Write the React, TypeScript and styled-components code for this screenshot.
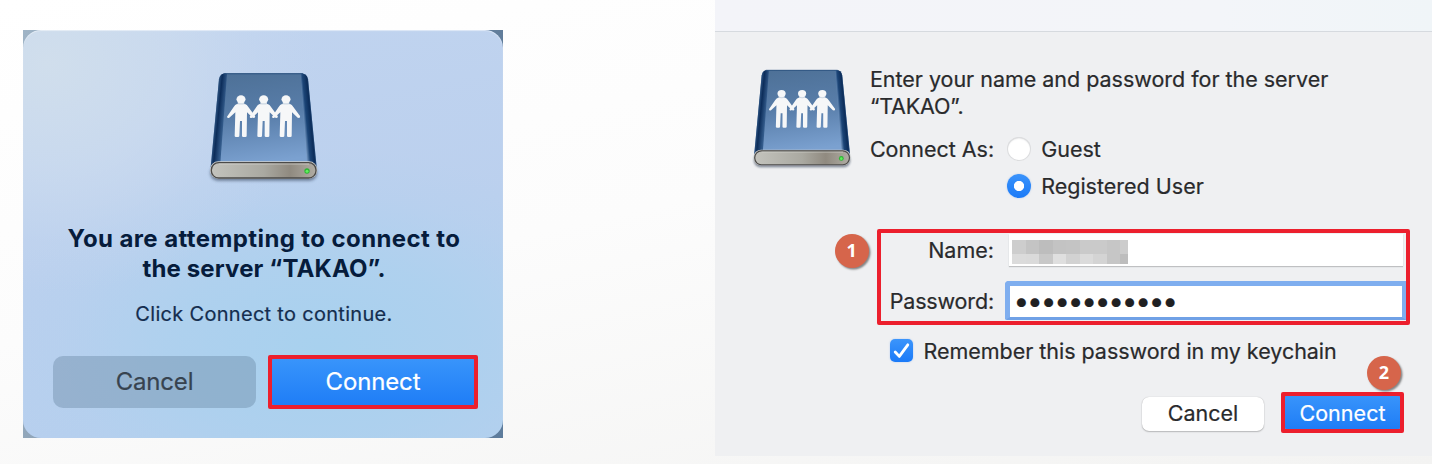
import React, { useId } from 'react';
import styled, { createGlobalStyle } from 'styled-components';

const GlobalStyle = createGlobalStyle`
  * { box-sizing: border-box; }
  body { margin: 0; font-family: "Inter", "Liberation Sans", sans-serif; }
  button { font-family: inherit; padding: 0; border: 0; }
`;

const Page = styled.main`
  display: flex;
  align-items: flex-start;
  width: 1432px;
  height: 464px;
  overflow: hidden;
  background: linear-gradient(168deg, #ffffff 0%, #fcfcfc 45%, #f3f3f2 100%);
`;

/* ---------- First dialog: connection prompt ---------- */

const PromptBackdrop = styled.section`
  flex: none;
  width: 480px;
  height: 408px;
  margin: 30px 212px 0 23px;
  background: linear-gradient(100deg, #9fb4c6 0%, #6c8199 50%, #5d7c9c 100%);
`;

const PromptDialog = styled.div`
  display: flex;
  flex-direction: column;
  align-items: center;
  height: 100%;
  padding: 40px 24px 0;
  border-radius: 18px;
  box-shadow: inset 0 1px 1px rgba(255, 255, 255, 0.5);
  background:
    radial-gradient(ellipse 270px 230px at 5% 8%, #d0deec 0%, rgba(205, 220, 238, 0.72) 45%, rgba(200, 217, 239, 0.25) 78%, rgba(200, 217, 239, 0) 100%),
    radial-gradient(ellipse 330px 200px at 62% 78%, #a8d1ee 0%, rgba(170, 209, 238, 0.7) 45%, rgba(174, 209, 238, 0.22) 78%, rgba(176, 208, 238, 0) 100%),
    linear-gradient(170deg, #c1d4ef 0%, #bbd0ee 50%, #b5cfee 100%);
`;

const PromptTitle = styled.h1`
  margin: 37.3px 0 0 2px;
  color: #061c3c;
  font-size: 24px;
  font-weight: 700;
  line-height: 30px;
  text-align: center;
`;

const TitleLine = styled.span<{ $tracking: number }>`
  display: block;
  letter-spacing: ${(p) => p.$tracking}px;
`;

const PromptHint = styled.p`
  margin: 17.2px 0 0 2px;
  color: #142d4e;
  font-size: 20px;
  line-height: 26px;
  letter-spacing: 0.3px;
  -webkit-text-stroke: 0.2px currentColor;
`;

const PromptActions = styled.div`
  display: flex;
  align-items: center;
  align-self: stretch;
  gap: 12px;
  margin: 27.5px 0 0 6px;
`;

const SoftButton = styled.button`
  width: 203px;
  height: 52px;
  border-radius: 10px;
  background: rgba(94, 124, 152, 0.36);
  color: #37434f;
  font-size: 24px;
  line-height: 52px;
  letter-spacing: -0.2px;
  -webkit-text-stroke: 0.2px currentColor;
`;

const Highlight = styled.div<{ $width: number; $height: number }>`
  width: ${(p) => p.$width}px;
  height: ${(p) => p.$height}px;
  border: 4px solid #ec1f2d;
  border-radius: 2px;
  background: #7d6fc0;
`;

const PrimaryButton = styled.button<{ $size: number; $tracking: number }>`
  display: flex;
  align-items: center;
  justify-content: center;
  width: 100%;
  height: 100%;
  border-radius: 2px;
  background: linear-gradient(#3894fb, #1f7df6);
  color: #fff;
  font-size: ${(p) => p.$size}px;
  letter-spacing: ${(p) => p.$tracking}px;
  -webkit-text-stroke: 0.2px currentColor;
`;

/* ---------- Second dialog: credentials ---------- */

const LoginWindow = styled.section`
  flex: 1;
  height: 456px;
  background: #eff0f2;
  color: #292a2c;
  font-size: 21.5px;
  line-height: 28px;
  -webkit-text-stroke: 0.2px currentColor;
`;

const TitleBar = styled.div`
  height: 32px;
  border-bottom: 1.5px solid #d6dadf;
  background: linear-gradient(90deg, #f3f4f9 0%, #f3f5f9 70%, #f0f5f8 100%);
`;

const Intro = styled.div`
  display: flex;
  align-items: flex-start;
  gap: 15px;
  padding: 34px 0 0 34.3px;
`;

const IconSlot = styled.div`
  display: flex;
  padding-top: 1px;
`;

const IntroText = styled.p`
  margin: 0 0 15px;
  line-height: 27px;
  letter-spacing: -0.02px;
`;

const ServerName = styled.span`
  letter-spacing: -0.15px;
`;

const ConnectAs = styled.div`
  display: flex;
  gap: 13px;
`;

const RadioGroup = styled.div`
  display: flex;
  flex-direction: column;
  gap: 9px;
`;

const Option = styled.div`
  display: flex;
  align-items: center;
  gap: 10px;
`;

const Radio = styled.span<{ $on?: boolean }>`
  width: 24px;
  height: 24px;
  border-radius: 50%;
  background: ${(p) => (p.$on ? 'radial-gradient(circle, #fff 0 4.7px, transparent 5.5px), linear-gradient(#3a93fb, #1b7af7)' : '#fff')};
  box-shadow: ${(p) => (p.$on ? '0 0 2px rgba(60, 130, 230, 0.35)' : 'inset 0 0 0 1px #dcdddf, inset 0 1px 2px #cfd0d2')};
`;

const FormArea = styled.div`
  position: relative;
  width: 533px;
  margin: 29px 0 0 162px;
`;

const Fields = styled.div`
  display: grid;
  grid-template-columns: 113px 1fr;
  grid-template-rows: 34px 40px;
  row-gap: 14px;
  height: 96px;
  border: 4px solid #ec1f2d;
  border-radius: 2px;
`;

const FieldLabel = styled.label<{ $tracking?: number }>`
  align-self: center;
  text-align: right;
  letter-spacing: ${(p) => p.$tracking ?? 0}px;
`;

const NameInput = styled.div`
  height: 32px;
  margin: 1px 3px 0 15px;
  padding: 6px 0 0 3px;
  background: #fff;
  box-shadow: 0 1px 1px #bfc0c2;
`;

const Mosaic = styled.div`
  display: grid;
  grid-template-columns: repeat(8, 13.5px) 7.5px;
  grid-template-rows: 13.5px 10.5px;
`;

const MosaicCell = styled.span<{ $tone: string }>`
  background: ${(p) => p.$tone};
`;

const PasswordInput = styled.div`
  height: 39px;
  margin-left: 11px;
  padding-left: 3.6px;
  border: 5px solid #7faeef;
  border-right-width: 4px;
  border-bottom: 3px solid #70a1e6;
  border-radius: 4px 0 0 2px;
  background: #fff;
  color: #1f2022;
  font-size: 28px;
  line-height: 30px;
  letter-spacing: -2.23px;
`;

const Remember = styled.div`
  display: flex;
  align-items: center;
  gap: 10.5px;
  margin: 12px 0 0 175px;
  letter-spacing: -0.03px;
`;

const Checkbox = styled.span`
  display: flex;
  width: 23px;
  height: 23px;
  margin-top: -2px;
  border-radius: 5px;
  background: linear-gradient(#3c95fb, #1a7af8);
  box-shadow: 0 0 2px rgba(60, 130, 230, 0.35);
`;

const LoginActions = styled.div`
  position: relative;
  display: flex;
  align-items: center;
  justify-content: flex-end;
  gap: 17px;
  margin: 27px 28px 0 0;
`;

const PlainButton = styled.button`
  width: 122px;
  height: 34px;
  margin-top: 3px;
  padding-bottom: 2px;
  border-radius: 7px;
  background: #fff;
  box-shadow: 0 0 1px rgba(0, 0, 0, 0.25), 0 1px 1.5px rgba(0, 0, 0, 0.22);
  color: #292a2c;
  font-size: 21.5px;
  -webkit-text-stroke: 0.2px currentColor;
`;

const StepBadge = styled.span<{ $left: number; $top: number }>`
  position: absolute;
  left: ${(p) => p.$left}px;
  top: ${(p) => p.$top}px;
  width: 34px;
  height: 34px;
  border-radius: 50%;
  background: #d6654b;
  box-shadow: 1.5px 1.5px 2px rgba(0, 0, 0, 0.45);
  color: #fff;
  font: 700 18px/33px "Open Sans", sans-serif;
  text-align: center;
  -webkit-text-stroke: 0;
`;

const mosaicTones = [
  '#cdcdcd', '#c4c4c4', '#bdbdbd', '#c3c3c3', '#c4c4c4', '#cacaca', '#cacaca', '#c6c6c6', '#cccccc',
  '#dbdbdb', '#dadada', '#c8c8c8', '#dfdfdf', '#d2d2d2', '#dbdbdb', '#d4d4d4', '#c6c6c6', '#bdbdbd',
];

function Figure({ x }: { x: number }) {
  return (
    <g transform={`translate(${x} 0)`}>
      <ellipse cx="0" cy="118" rx="13.5" ry="12" />
      <path d="M-10 127 H10 V136 H-10Z" opacity="0.75" />
      <path d="M-12 132 Q0 135 12 132 Q18 134 22 141 L42 168 Q44 173 39 174 L35 173 L18 157 L17 228 Q17 231 13 231 L7 231 Q3 231 3 228 L3 183 L-3 183 L-5 228 Q-5 231 -9 231 L-15 231 Q-19 231 -19 228 L-17 157 L-35 173 Q-41 176 -42 170 L-22 141 Q-18 134 -12 132Z" />
    </g>
  );
}

function ServerIcon({ size }: { size: number }) {
  const id = useId().replace(/:/g, '');
  return (
    <svg width={size} height={size} viewBox="16 30 350 350" style={{ display: 'block' }}>
      <defs>
        <linearGradient id={`${id}c`} x1="0" y1="0" x2="0.15" y2="1">
          <stop offset="0" stopColor="#4d7096" />
          <stop offset="0.5" stopColor="#587da9" />
          <stop offset="1" stopColor="#7ba1d0" />
        </linearGradient>
        <linearGradient id={`${id}l`} gradientUnits="userSpaceOnUse" x1="42" y1="170" x2="72" y2="173">
          <stop offset="0" stopColor="#3d6593" />
          <stop offset="0.45" stopColor="#0c2d5a" />
          <stop offset="1" stopColor="#335b8b" />
        </linearGradient>
        <linearGradient id={`${id}r`} gradientUnits="userSpaceOnUse" x1="310" y1="173" x2="342" y2="170">
          <stop offset="0" stopColor="#7699c3" />
          <stop offset="0.3" stopColor="#1c4577" />
          <stop offset="0.7" stopColor="#0c2d5a" />
          <stop offset="1" stopColor="#3d6593" />
        </linearGradient>
        <linearGradient id={`${id}b`} x1="0" y1="0" x2="1" y2="0">
          <stop offset="0" stopColor="#c3c3bd" />
          <stop offset="0.5" stopColor="#aaa9a1" />
          <stop offset="0.75" stopColor="#908a80" />
          <stop offset="1" stopColor="#b0aca3" />
        </linearGradient>
        <filter id={`${id}s`} x="-10%" y="-50%" width="120%" height="220%">
          <feGaussianBlur stdDeviation="4" />
        </filter>
      </defs>
      <rect x="32" y="316" width="320" height="46" rx="22" fill="#26364c" opacity="0.55" filter={`url(#${id}s)`} />
      <path d="M78 40 H304 Q322 40 325 58 L351 322 H33 L58 58 Q61 40 78 40Z" fill={`url(#${id}c)`} />
      <path d="M78 40 Q61 40 58 58 L33 322 L62 308 L82 42Z" fill={`url(#${id}l)`} />
      <path d="M302 40 Q322 40 325 58 L351 322 L322 308Z" fill={`url(#${id}r)`} />
      <path d="M72 41 H310" stroke="#2b527f" strokeWidth="3" />
      <rect x="31" y="304" width="322" height="52" rx="25" fill="#cfd0ce" />
      <rect x="35" y="308" width="314" height="46" rx="22" fill={`url(#${id}b)`} stroke="#4b4a48" strokeWidth="4" />
      <path d="M58 312 H328" stroke="#d6d6d1" strokeWidth="2" />
      <circle cx="322" cy="333" r="8" fill="#2fb435" />
      <circle cx="322" cy="334" r="4.5" fill="#5ff05c" />
      <g fill="#f6f7f8">
        <Figure x={124} />
        <Figure x={192} />
        <Figure x={259} />
      </g>
    </svg>
  );
}

export default function App() {
  return (
    <>
      <GlobalStyle />
      <Page>
        <PromptBackdrop>
          <PromptDialog>
            <ServerIcon size={116.7} />
            <PromptTitle>
              <TitleLine $tracking={0.4}>You are attempting to connect to</TitleLine>
              <TitleLine $tracking={0.14}>the server “TAKAO”.</TitleLine>
            </PromptTitle>
            <PromptHint>Click Connect to continue.</PromptHint>
            <PromptActions>
              <SoftButton>Cancel</SoftButton>
              <Highlight $width={210} $height={54}>
                <PrimaryButton $size={24} $tracking={-0.15}>Connect</PrimaryButton>
              </Highlight>
            </PromptActions>
          </PromptDialog>
        </PromptBackdrop>

        <LoginWindow>
          <TitleBar />
          <Intro>
            <IconSlot>
              <ServerIcon size={105.6} />
            </IconSlot>
            <div>
              <IntroText>
                Enter your name and password for the server
                <br />
                <ServerName>“TAKAO”.</ServerName>
              </IntroText>
              <ConnectAs>
                <span>Connect As:</span>
                <RadioGroup>
                  <Option><Radio />Guest</Option>
                  <Option><Radio $on />Registered User</Option>
                </RadioGroup>
              </ConnectAs>
            </div>
          </Intro>

          <FormArea>
            <Fields>
              <FieldLabel>Name:</FieldLabel>
              <NameInput>
                <Mosaic>
                  {mosaicTones.map((tone, i) => <MosaicCell key={i} $tone={tone} />)}
                </Mosaic>
              </NameInput>
              <FieldLabel $tracking={-0.15}>Password:</FieldLabel>
              <PasswordInput>{'•'.repeat(12)}</PasswordInput>
            </Fields>
            <StepBadge $left={-42.3} $top={5}>1</StepBadge>
          </FormArea>

          <Remember>
            <Checkbox>
              <svg width="23" height="23" viewBox="0 0 23 23">
                <path d="M5.2 13 L9.3 17.4 L17.8 5.8" fill="none" stroke="#fff" strokeWidth="2.8" strokeLinecap="round" strokeLinejoin="round" />
              </svg>
            </Checkbox>
            Remember this password in my keychain
          </Remember>

          <LoginActions>
            <PlainButton>Cancel</PlainButton>
            <Highlight $width={123} $height={41}>
              <PrimaryButton $size={21.5} $tracking={0.05}>Connect</PrimaryButton>
            </Highlight>
            <StepBadge $left={652} $top={-36}>2</StepBadge>
          </LoginActions>
        </LoginWindow>
      </Page>
    </>
  );
}
